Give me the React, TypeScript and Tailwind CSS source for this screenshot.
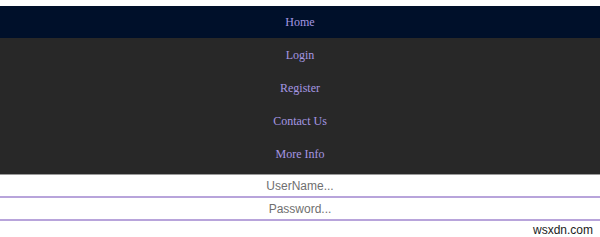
import React from "react";

const links = ["Login", "Register", "Contact Us", "More Info"];

export default function App() {
  return (
    <div className="w-[600px] h-[237px] bg-white pt-[6px] flex flex-col">
      <nav className="bg-[#282828] pb-[4px] font-['Liberation_Serif',serif] text-[12px] text-[#a597e3]">
        <a className="flex h-[32px] items-center justify-center bg-[#00102a]">Home</a>
        {links.map((l) => (
          <a key={l} className="flex h-[33px] items-center justify-center">
            {l}
          </a>
        ))}
      </nav>
      <div className="flex flex-col font-['Liberation_Sans',sans-serif] text-[12px]">
        <input
          placeholder="UserName..."
          className="h-[24px] w-full border-t border-t-[#9a9a9a] border-b-2 border-b-[#b8a4db] text-center outline-none placeholder:text-[#6f6f6f]"
        />
        <input
          type="password"
          placeholder="Password..."
          className="h-[23px] w-full border-b-2 border-b-[#b8a4db] text-center outline-none placeholder:text-[#6f6f6f]"
        />
      </div>
      <div className="flex justify-end pr-[7px] font-['Liberation_Sans',sans-serif] text-[12px] text-[#222]">
        wsxdn.com
      </div>
    </div>
  );
}
